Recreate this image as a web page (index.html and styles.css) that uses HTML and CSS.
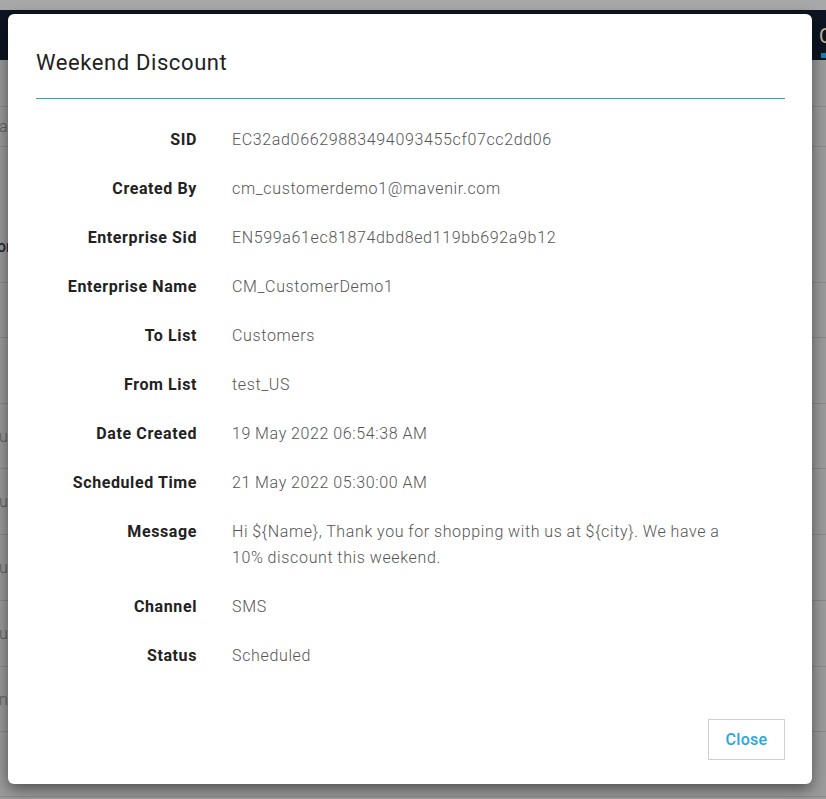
FILE: index.html
```html
<!DOCTYPE html>
<html>
<head>
<meta charset="utf-8">
<link rel="stylesheet" href="styles.css">
</head>
<body>
<div class="page">
  <div class="topstrip"></div>
  <div class="nav">
    <span class="nav-glyph">C</span>
    <span class="nav-tab"></span>
  </div>
  <div class="grid">
    <div class="brow h47"></div>
    <div class="brow h40"><span class="frag light">a</span></div>
    <div class="brow h136 bottom"><span class="frag dark">or</span></div>
    <div class="brow h55"></div>
    <div class="brow h66"></div>
    <div class="brow h65"><span class="frag light">u</span></div>
    <div class="brow h66"><span class="frag light">u</span></div>
    <div class="brow h66"><span class="frag light">u</span></div>
    <div class="brow h66"><span class="frag light">u</span></div>
    <div class="brow h65"><span class="frag light">na</span></div>
    <div class="brow h65"></div>
  </div>
</div>

<div class="modal">
  <div class="modal-header">
    <h4 class="modal-title">Weekend Discount</h4>
  </div>
  <div class="modal-body">
    <div class="row"><div class="label">SID</div><div class="value">EC32ad06629883494093455cf07cc2dd06</div></div>
    <div class="row"><div class="label">Created By</div><div class="value">cm_customerdemo1@mavenir.com</div></div>
    <div class="row"><div class="label">Enterprise Sid</div><div class="value">EN599a61ec81874dbd8ed119bb692a9b12</div></div>
    <div class="row"><div class="label">Enterprise Name</div><div class="value">CM_CustomerDemo1</div></div>
    <div class="row"><div class="label">To List</div><div class="value">Customers</div></div>
    <div class="row"><div class="label">From List</div><div class="value">test_US</div></div>
    <div class="row"><div class="label">Date Created</div><div class="value">19 May 2022 06:54:38 AM</div></div>
    <div class="row"><div class="label">Scheduled Time</div><div class="value">21 May 2022 05:30:00 AM</div></div>
    <div class="row"><div class="label">Message</div><div class="value">Hi ${Name}, Thank you for shopping with us at ${city}. We have a 10% discount this weekend.</div></div>
    <div class="row"><div class="label">Channel</div><div class="value">SMS</div></div>
    <div class="row"><div class="label">Status</div><div class="value">Scheduled</div></div>
  </div>
  <div class="modal-footer">
    <button class="btn-close">Close</button>
  </div>
</div>
</body>
</html>
```

FILE: styles.css
```css
* { box-sizing: border-box; }
html, body {
  margin: 0;
  padding: 0;
  width: 826px;
  height: 799px;
  overflow: hidden;
  background: #9c9c9c;
  font-family: Roboto, "Liberation Sans", sans-serif;
}

.page {
  width: 826px;
  height: 799px;
  overflow: hidden;
}
.topstrip {
  height: 10px;
  background: #a8a8a8;
}
.nav {
  height: 50px;
  background: #0d1523;
  position: relative;
}
.nav-glyph {
  position: absolute;
  left: 819px;
  top: 14px;
  font-size: 20px;
  line-height: 24px;
  color: #c9b596;
}
.nav-tab {
  position: absolute;
  left: 821px;
  top: 43px;
  width: 6px;
  height: 5px;
  background: #1a7fa8;
}

.grid {
  display: flex;
  flex-direction: column;
}
.brow {
  border-bottom: 1px solid #8b8b8b;
  display: flex;
  align-items: center;
  font-size: 16px;
  overflow: hidden;
}
.brow.bottom { align-items: flex-end; padding-bottom: 26px; }
.h47 { height: 47px; }
.h40 { height: 40px; }
.h136 { height: 136px; }
.h55 { height: 55px; }
.h66 { height: 66px; }
.h65 { height: 65px; }
.frag { margin-left: -1px; }
.frag.light { color: #5c5c5c; font-weight: 300; }
.frag.dark { color: #2a2a2a; font-weight: 500; margin-left: -3px; }

.modal {
  position: absolute;
  left: 8px;
  top: 14px;
  width: 804px;
  background: #fff;
  border-radius: 6px;
  box-shadow: 0 5px 15px rgba(0, 0, 0, 0.5);
  padding: 0 27px 0 28px;
}
.modal-header {
  padding: 37px 0 23px;
  border-bottom: 1px solid #1ba8e0;
}
.modal-title {
  margin: 0;
  font-size: 22px;
  line-height: 24px;
  font-weight: 400;
  color: #222;
  letter-spacing: 0.6px;
}
.modal-body {
  padding-top: 28px;
  display: flex;
  flex-direction: column;
  gap: 23px;
}
.row {
  display: flex;
  gap: 35px;
  font-size: 16px;
  line-height: 26px;
}
.label {
  width: 161px;
  flex: none;
  text-align: right;
  font-weight: 700;
  color: #222;
  letter-spacing: 0.6px;
}
.value {
  width: 500px;
  font-weight: 300;
  color: #555;
  letter-spacing: 0.65px;
  word-spacing: -0.5px;
}
.modal-footer {
  display: flex;
  justify-content: flex-end;
  padding: 50px 0 24px;
}
.btn-close {
  width: 77px;
  height: 41px;
  background: #fff;
  border: 1px solid #cfcfcf;
  border-radius: 0;
  font-family: Roboto, "Liberation Sans", sans-serif;
  font-size: 16px;
  font-weight: 500;
  color: #27a6df;
  letter-spacing: 0.3px;
  padding: 0;
}
```
